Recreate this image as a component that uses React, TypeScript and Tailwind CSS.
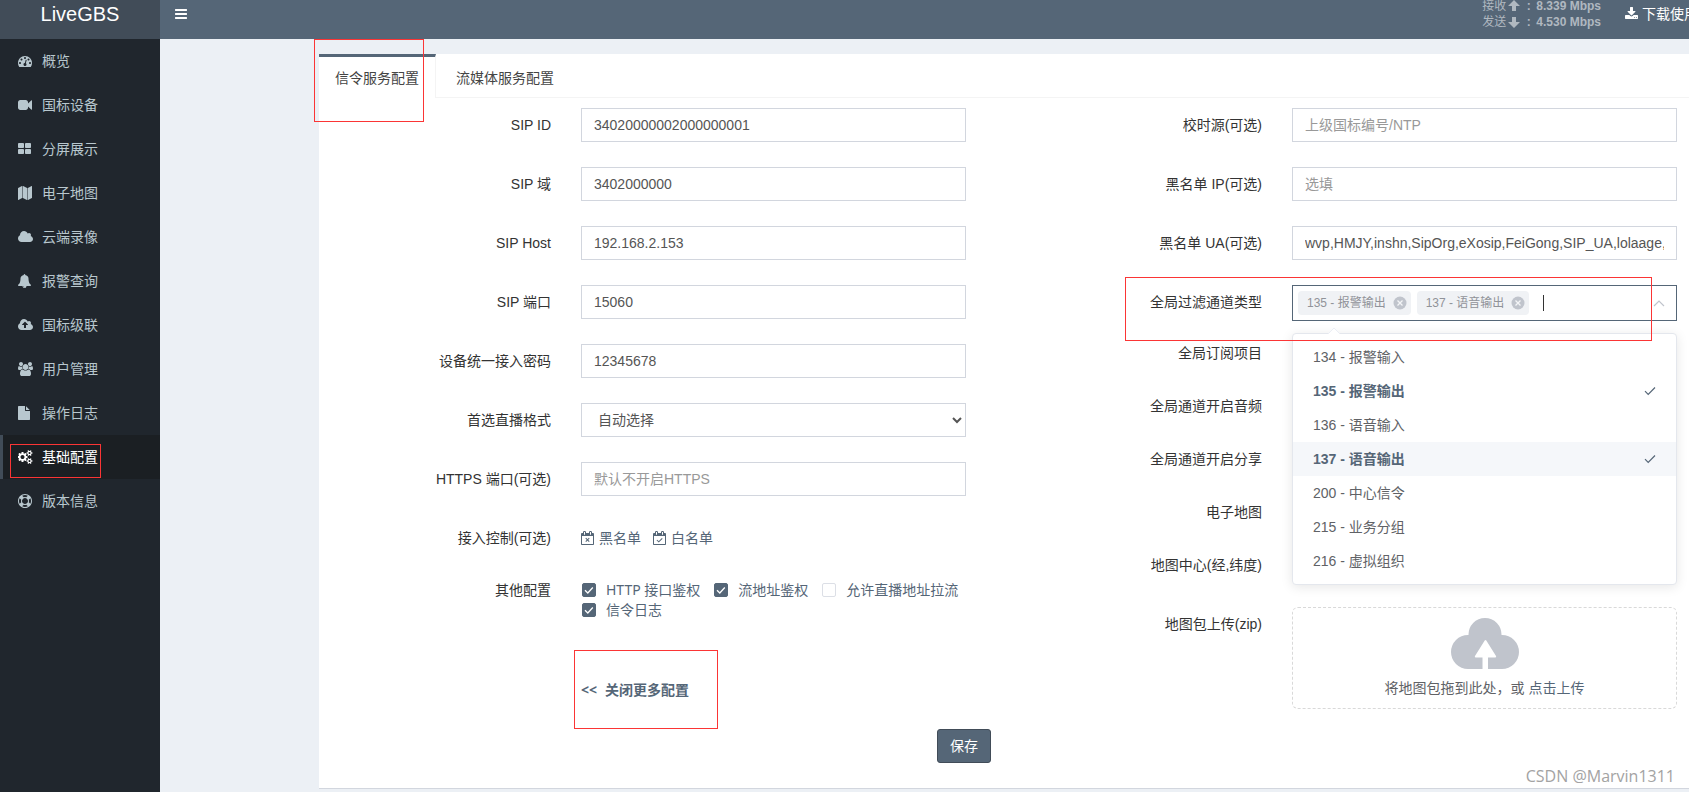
import React from "react";

const CLOUD =
  "M1984 1152q0 159-112.5 271.5t-271.5 112.5h-1088q-185 0-316.5-131.5t-131.5-316.5q0-132 71-241.5t187-163.5q-2-28-2-43 0-212 150-362t362-150q158 0 286.5 88t187.5 230q70-62 166-62 106 0 181 75t75 181q0 75-41 138 129 30 213 134.5t84 239.5z";
const SMALL_COG =
  "v140q0 16-149 31-12 27-30 52 51 113 51 138 0 4-4 7-122 71-124 71-8 0-46-47t-52-68q-20 2-30 2t-30-2q-14 21-52 68t-46 47q-2 0-124-71-4-3-4-7 0-25 51-138-18-25-30-52-149-15-149-31v-140q0-16 149-31 13-29 30-52-51-113-51-138 0-4 4-7 4-2 35-20t59-34 30-16q8 0 46 46.5t52 67.5q20-2 30-2t30 2q51-71 92-112l6-2q4 0 124 70 4 3 4 7 0 25-51 138 17 23 30 52 149 15 149 31z";

const ICONS = {
  bars: {
    box: "128 0 1536 1792",
    d: "M1664 1344v128q0 26-19 45t-45 19h-1408q-26 0-45-19t-19-45v-128q0-26 19-45t45-19h1408q26 0 45 19t19 45zm0-512v128q0 26-19 45t-45 19h-1408q-26 0-45-19t-19-45v-128q0-26 19-45t45-19h1408q26 0 45 19t19 45zm0-512v128q0 26-19 45t-45 19h-1408q-26 0-45-19t-19-45v-128q0-26 19-45t45-19h1408q26 0 45 19t19 45z",
  },
  dashboard: {
    box: "0 0 1792 1792",
    d: "M384 1152q0-53-37.5-90.5t-90.5-37.5-90.5 37.5-37.5 90.5 37.5 90.5 90.5 37.5 90.5-37.5 37.5-90.5zm192-448q0-53-37.5-90.5t-90.5-37.5-90.5 37.5-37.5 90.5 37.5 90.5 90.5 37.5 90.5-37.5 37.5-90.5zm428 481l101-382q6-26-7.5-48.5t-38.5-29.5-48 6.5-30 39.5l-101 382q-60 5-107 43.5t-63 98.5q-20 77 20 146t117 89 146-20 89-117q16-60-6-117t-72-91zm660-33q0-53-37.5-90.5t-90.5-37.5-90.5 37.5-37.5 90.5 37.5 90.5 90.5 37.5 90.5-37.5 37.5-90.5zm-640-640q0-53-37.5-90.5t-90.5-37.5-90.5 37.5-37.5 90.5 37.5 90.5 90.5 37.5 90.5-37.5 37.5-90.5zm448 192q0-53-37.5-90.5t-90.5-37.5-90.5 37.5-37.5 90.5 37.5 90.5 90.5 37.5 90.5-37.5 37.5-90.5zm320 448q0 261-141 483-19 29-54 29h-1402q-35 0-54-29-141-221-141-483 0-182 71-348t191-286 286-191 348-71 348 71 286 191 191 286 71 348z",
  },
  video: {
    box: "0 0 1792 1792",
    d: "M1792 352v1088q0 42-39 59-13 5-25 5-27 0-45-19l-403-403v166q0 119-84.5 203.5t-203.5 84.5h-704q-119 0-203.5-84.5t-84.5-203.5v-704q0-119 84.5-203.5t203.5-84.5h704q119 0 203.5 84.5t84.5 203.5v165l403-402q18-19 45-19 12 0 25 5 39 17 39 59z",
  },
  grid: {
    box: "64 0 1664 1792",
    d: "M832 1024v384q0 52-38 90t-90 38h-512q-52 0-90-38t-38-90v-384q0-52 38-90t90-38h512q52 0 90 38t38 90zm0-768v384q0 52-38 90t-90 38h-512q-52 0-90-38t-38-90v-384q0-52 38-90t90-38h512q52 0 90 38t38 90zm896 768v384q0 52-38 90t-90 38h-512q-52 0-90-38t-38-90v-384q0-52 38-90t90-38h512q52 0 90 38t38 90zm0-768v384q0 52-38 90t-90 38h-512q-52 0-90-38t-38-90v-384q0-52 38-90t90-38h512q52 0 90 38t38 90z",
  },
  map: {
    box: "0 0 1792 1792",
    d: "M512 0q13 0 22.5 9.5t9.5 22.5v1472q0 20-17 28l-480 256q-7 4-15 4-13 0-22.5-9.5t-9.5-22.5v-1472q0-20 17-28l480-256q7-4 15-4zm1248 0q13 0 22.5 9.5t9.5 22.5v1472q0 20-17 28l-480 256q-7 4-15 4-13 0-22.5-9.5t-9.5-22.5v-1472q0-20 17-28l480-256q7-4 15-4zm-1120 0q8 0 14 3l512 256q18 10 18 29v1472q0 13-9.5 22.5t-22.5 9.5q-8 0-14-3l-512-256q-18-10-18-29v-1472q0-13 9.5-22.5t22.5-9.5z",
  },
  cloud: { box: "64 0 1920 1792", d: CLOUD },
  bell: {
    box: "64 0 1664 1792",
    d: "M912 1696q0-16-16-16-59 0-101.5-42.5t-42.5-101.5q0-16-16-16t-16 16q0 73 51.5 124.5t124.5 51.5q16 0 16-16zm816-288q0 52-38 90t-90 38h-448q0 106-75 181t-181 75-181-75-75-181h-448q-52 0-90-38t-38-90q50-42 91-88t85-119.5 74.5-158.5 50-206 19.5-260q0-152 117-282.5t307-158.5q-8-19-8-39 0-40 28-68t68-28 68 28 28 68q0 20-8 39 190 28 307 158.5t117 282.5q0 139 19.5 260t50 206 74.5 158.5 85 119.5 91 88z",
  },
  cloudUpload: {
    box: "64 0 1920 1792",
    d:
      "M1344 864q0-14-9-23l-352-352q-9-9-23-9t-23 9l-351 351q-10 12-10 24 0 14 9 23t23 9h224v352q0 13 9.5 22.5t22.5 9.5h192q13 0 22.5-9.5t9.5-22.5v-352h224q13 0 22.5-9.5t9.5-22.5z" +
      CLOUD,
  },
  users: {
    box: "-64 0 1920 1792",
    d: "M529 896q-162 5-265 128h-134q-82 0-138-40.5t-56-118.5q0-353 124-353 6 0 43.5 21t97.5 42.5 119 21.5q67 0 133-23-5 37-5 66 0 139 81 256zm1071 637q0 120-73 189.5t-194 69.5h-874q-121 0-194-69.5t-73-189.5q0-53 3.5-103.5t14-109 26.5-108.5 43-97.5 62-81 85.5-53.5 111.5-20q10 0 43 21.5t73 48 107 48 135 21.5 135-21.5 107-48 73-48 43-21.5q61 0 111.5 20t85.5 53.5 62 81 43 97.5 26.5 108.5 14 109 3.5 103.5zm-1024-1277q0 106-75 181t-181 75-181-75-75-181 75-181 181-75 181 75 75 181zm704 384q0 159-112.5 271.5t-271.5 112.5-271.5-112.5-112.5-271.5 112.5-271.5 271.5-112.5 271.5 112.5 112.5 271.5zm576 225q0 78-56 118.5t-138 40.5h-134q-103-123-265-128 81-117 81-256 0-29-5-66 66 23 133 23 59 0 119-21.5t97.5-42.5 43.5-21q124 0 124 353zm-128-609q0 106-75 181t-181 75-181-75-75-181 75-181 181-75 181 75 75 181z",
  },
  file: {
    box: "128 0 1536 1792",
    d: "M1152 512v-472q22 14 36 28l408 408q14 14 28 36h-472zm-128 32q0 40 28 68t68 28h544v1056q0 40-28 68t-68 28h-1344q-40 0-68-28t-28-68v-1600q0-40 28-68t68-28h800v544z",
  },
  cogs: {
    box: "0 0 1920 1792",
    d:
      "M832 896q0-106-75-181t-181-75-181 75-75 181 75 181 181 75 181-75 75-181zm768 512q0-52-38-90t-90-38-90 38-38 90q0 53 37.5 90.5t90.5 37.5 90.5-37.5 37.5-90.5zm0-1024q0-52-38-90t-90-38-90 38-38 90q0 53 37.5 90.5t90.5 37.5 90.5-37.5 37.5-90.5zm-384 421v185q0 10-7 19.5t-16 10.5l-155 24q-11 35-32 76 34 48 90 115 7 11 7 20 0 12-7 19-23 30-82.5 89.5t-78.5 59.5q-11 0-21-7l-115-90q-37 19-77 31-11 108-23 155-7 24-30 24h-186q-11 0-20-7.5t-10-17.5l-23-153q-34-10-75-31l-118 89q-7 7-20 7-11 0-21-8-144-133-144-160 0-9 7-19 10-14 41-53t47-61q-23-44-35-82l-152-24q-10-1-17-9.5t-7-19.5v-185q0-10 7-19.5t16-10.5l155-24q11-35 32-76-34-48-90-115-7-11-7-20 0-12 7-20 22-30 82-89t79-59q11 0 21 7l115 90q34-18 77-32 11-108 23-154 7-24 30-24h186q11 0 20 7.5t10 17.5l23 153q34 10 75 31l118-89q8-7 20-7 11 0 21 8 144 133 144 160 0 8-7 19-12 16-42 54t-45 60q23 48 34 82l152 23q10 2 17 10.5t7 19.5z" +
      "M1856 1338" +
      SMALL_COG +
      "M1856 314" +
      SMALL_COG,
  },
  ring: {
    box: "0 0 1792 1792",
    d: "M896 0q182 0 348 71t286 191 191 286 71 348-71 348-191 286-286 191-348 71-348-71-286-191-191-286-71-348 71-348 191-286 286-191 348-71zm0 128q-190 0-361 90l194 194q82-28 167-28t167 28l194-194q-171-90-361-90zm-678 1129l194-194q-28-82-28-167t28-167l-194-194q-90 171-90 361t90 361zm678 407q190 0 361-90l-194-194q-82 28-167 28t-167-28l-194 194q171 90 361 90zm0-384q159 0 271.5-112.5t112.5-271.5-112.5-271.5-271.5-112.5-271.5 112.5-112.5 271.5 112.5 271.5 271.5 112.5zm484-217l194 194q90-171 90-361t-90-361l-194 194q28 82 28 167t-28 167z",
  },
  download: {
    box: "64 0 1664 1792",
    d: "M1344 1344q0-26-19-45t-45-19-45 19-19 45 19 45 45 19 45-19 19-45zm256 0q0-26-19-45t-45-19-45 19-19 45 19 45 45 19 45-19 19-45zm128-224v320q0 40-28 68t-68 28h-1472q-40 0-68-28t-28-68v-320q0-40 28-68t68-28h465l135 136q58 56 136 56t136-56l136-136h464q40 0 68 28t28 68zm-325-569q17 41-14 70l-448 448q-18 19-45 19t-45-19l-448-448q-31-29-14-70 17-39 59-39h256v-448q0-26 19-45t45-19h256q26 0 45 19t19 45v448h256q42 0 59 39z",
  },
};
type IconName = keyof typeof ICONS;

function Icon({ name }: { name: IconName }) {
  const { box, d } = ICONS[name];
  return (
    <svg viewBox={box} className="h-3.5 w-auto shrink-0" fill="currentColor" fillRule="evenodd" aria-hidden="true">
      <path d={d} />
    </svg>
  );
}

function CalendarIcon({ mark }: { mark: string }) {
  return (
    <svg viewBox="64 0 1664 1792" className="h-3.5 w-auto shrink-0" fill="currentColor" aria-hidden="true">
      <path
        fillRule="evenodd"
        d="M192 1664h1408v-1024h-1408v1024zm384-1216v-288q0-14-9-23t-23-9h-64q-14 0-23 9t-9 23v288q0 14 9 23t23 9h64q14 0 23-9t9-23zm768 0v-288q0-14-9-23t-23-9h-64q-14 0-23 9t-9 23v288q0 14 9 23t23 9h64q14 0 23-9t9-23zm384-64v1280q0 52-38 90t-90 38h-1408q-52 0-90-38t-38-90v-1280q0-52 38-90t90-38h128v-96q0-66 47-113t113-47h64q66 0 113 47t47 113v96h384v-96q0-66 47-113t113-47h64q66 0 113 47t47 113v96h128q52 0 90 38t38 90z"
      />
      <path d={mark} fill="none" stroke="currentColor" strokeWidth="130" />
    </svg>
  );
}

function BlockArrow({ down = false }: { down?: boolean }) {
  return (
    <svg viewBox="0 0 12 12" className="mr-px ml-0.5 h-3 w-3 shrink-0" fill="currentColor" aria-hidden="true">
      <path d={down ? "M4 1h4v5h4L6 12 0 6h4z" : "M4 11h4V6h4L6 0 0 6h4z"} />
    </svg>
  );
}

const NAV: { icon: IconName; label: string }[] = [
  { icon: "dashboard", label: "概览" },
  { icon: "video", label: "国标设备" },
  { icon: "grid", label: "分屏展示" },
  { icon: "map", label: "电子地图" },
  { icon: "cloud", label: "云端录像" },
  { icon: "bell", label: "报警查询" },
  { icon: "cloudUpload", label: "国标级联" },
  { icon: "users", label: "用户管理" },
  { icon: "file", label: "操作日志" },
  { icon: "cogs", label: "基础配置" },
  { icon: "ring", label: "版本信息" },
];

const FIELD =
  "block h-[34px] w-full rounded-none border border-[#d2d6de] bg-white px-3 text-sm text-[#555] outline-none placeholder:text-[#999]";
const ROW = "grid grid-cols-[222px_minmax(0,1fr)] gap-x-[30px]";
const LABEL = "text-right text-sm leading-[34px] text-[#333]";

function TextRow({ id, label, value, placeholder }: { id: string; label: string; value?: string; placeholder?: string }) {
  return (
    <div className={ROW}>
      <label htmlFor={id} className={LABEL}>
        {label}
      </label>
      <input id={id} type="text" defaultValue={value} placeholder={placeholder} className={FIELD} />
    </div>
  );
}

function Tick({ label, checked = false }: { label: string; checked?: boolean }) {
  return (
    <label className="flex h-5 items-center text-sm text-[#556677]">
      <span className="relative mr-2.5 ml-px flex h-3.5 w-3.5">
        <input
          type="checkbox"
          defaultChecked={checked}
          className="peer h-3.5 w-3.5 appearance-none rounded-xs border border-[#dcdfe6] bg-white checked:border-[#556677] checked:bg-[#556677]"
        />
        <svg
          viewBox="0 0 14 14"
          className="pointer-events-none absolute inset-0 hidden h-3.5 w-3.5 peer-checked:block"
          fill="none"
          stroke="#fff"
          strokeWidth="1.3"
          aria-hidden="true"
        >
          <path d="M3 7.200l2.800 2.800 5-5.500" />
        </svg>
      </span>
      {label}
    </label>
  );
}

const OPTIONS = [
  { text: "134 - 报警输入" },
  { text: "135 - 报警输出", on: true },
  { text: "136 - 语音输入" },
  { text: "137 - 语音输出", on: true, hover: true },
  { text: "200 - 中心信令" },
  { text: "215 - 业务分组" },
  { text: "216 - 虚拟组织" },
];

function Tag({ text }: { text: string }) {
  return (
    <span className="flex h-6 items-center gap-[7px] rounded-sm bg-[#f0f2f5] pr-1 pl-[9px] text-xs whitespace-nowrap text-[#909399]">
      {text}
      <button type="button" aria-label={"移除 " + text} className="h-3.5 w-3.5">
        <svg viewBox="0 0 14 14" className="block h-3.5 w-3.5" aria-hidden="true">
          <circle cx="7" cy="7" r="6.5" fill="#c0c4cc" />
          <path d="M4.500 4.500l5 5m0-5l-5 5" stroke="#f4f5f7" strokeWidth="1.3" />
        </svg>
      </button>
    </span>
  );
}

function ChannelSelect() {
  return (
    <div className="relative">
      <div className="flex h-9 items-center gap-1.5 border border-[#556677] bg-white pr-[11px] pl-[5px]">
        <Tag text="135 - 报警输出" />
        <Tag text="137 - 语音输出" />
        <span className="ml-2 h-4 w-px bg-[#333]" />
        <input id="channel" type="text" role="combobox" aria-expanded="true" aria-controls="channel-list" className="h-7 min-w-0 flex-1 text-sm outline-none" />
        <svg viewBox="0 0 12 12" className="h-3 w-3 shrink-0" fill="none" stroke="#c0c4cc" strokeWidth="1.2" aria-hidden="true">
          <path d="M1 9l5-5 5 5" />
        </svg>
      </div>
      <div className="absolute inset-x-0 top-12 z-10 rounded-sm border border-[#e4e7ed] bg-white py-1.5 shadow-[0_2px_12px_0_rgba(0,0,0,0.1)]">
        <svg viewBox="0 0 12 6" className="absolute -top-1.5 left-[35px] h-1.5 w-3" aria-hidden="true">
          <path d="M0 6l6-6 6 6" fill="#fff" stroke="#ebeef5" />
        </svg>
        <ul id="channel-list" role="listbox" aria-multiselectable="true">
          {OPTIONS.map((o) => (
            <li
              key={o.text}
              role="option"
              aria-selected={!!o.on}
              className={
                "flex h-[34px] items-center justify-between pr-5 pl-5 text-sm " +
                (o.on ? "font-bold text-[#556677] " : "text-[#606266] ") +
                (o.hover ? "bg-[#f5f7fa]" : "")
              }
            >
              {o.text}
              {o.on && (
                <svg viewBox="0 0 12 12" className="h-3 w-3" fill="none" stroke="#556677" strokeWidth="1.2" aria-hidden="true">
                  <path d="M1 6.200l3.200 3.300L11 2.500" />
                </svg>
              )}
            </li>
          ))}
        </ul>
      </div>
    </div>
  );
}

function Outline({ className }: { className: string }) {
  return <span className={"pointer-events-none absolute z-20 border border-[#fb3535] " + className} />;
}

export default function App() {
  return (
    <div className="flex min-h-screen flex-col overflow-hidden bg-[#ecf0f5] font-['Liberation_Sans','Noto_Sans_CJK_SC',sans-serif] text-sm text-[#333]">
      <header className="flex h-[39px] overflow-hidden bg-[#556677] text-white">
        <a href="#home" className="w-40 shrink-0 bg-[#414c58] text-center text-xl leading-7">
          LiveGBS
        </a>
        <div className="flex h-7 min-w-0 flex-1 items-center">
          <button type="button" aria-label="菜单" className="pl-[15px]">
            <Icon name="bars" />
          </button>
          <div className="ml-auto text-xs leading-4 font-bold text-[#b0b8c0]">
            <div className="flex items-center">
              <span className="font-normal">接收</span>
              <BlockArrow />
              <span className="w-[15px] text-center">:</span>8.339 Mbps
            </div>
            <div className="flex items-center">
              <span className="font-normal">发送</span>
              <BlockArrow down />
              <span className="w-[15px] text-center">:</span>4.530 Mbps
            </div>
          </div>
          <a href="#download" className="ml-6 flex w-16 shrink-0 items-center gap-1 whitespace-nowrap">
            <Icon name="download" />
            <span className="shrink-0">下载使用</span>
          </a>
        </div>
      </header>

      <div className="flex flex-1">
        <nav className="w-40 shrink-0 bg-[#20262d]">
          {NAV.map((n) => {
            const active = n.label === "基础配置";
            return (
              <a
                key={n.label}
                href={"#" + n.icon}
                className={
                  "relative flex h-11 items-center border-l-3 pl-[15px] " +
                  (active ? "border-[#414c58] bg-[#1b1f23] text-white" : "border-transparent text-[#b8c7ce]")
                }
              >
                <span className="flex w-6 items-center">
                  <Icon name={n.icon} />
                </span>
                {n.label}
                {active && <Outline className="top-[9px] left-[7px] h-[34px] w-[91px]" />}
              </a>
            );
          })}
        </nav>

        <main className="min-w-0 flex-1 pt-[15px] pb-[3px] pl-[159px]">
          <section className="relative flex h-full flex-col border-b border-[#d2d6de] bg-white">
            <Outline className="-top-[15px] -left-[5px] h-[83px] w-[110px]" />
            <div role="tablist" className="flex">
              <button type="button" role="tab" aria-selected="true" className="h-11 border-t-3 border-r border-t-[#556677] border-r-[#f4f4f4] px-4 text-[#444]">
                信令服务配置
              </button>
              <button type="button" role="tab" aria-selected="false" className="h-11 border-t-3 border-t-transparent px-5 text-[#444] shadow-[inset_0_-1px_0_#f4f4f4]">
                流媒体服务配置
              </button>
              <div className="flex-1 border-b border-[#f4f4f4]" />
            </div>

            <form className="grid grid-cols-2 gap-x-[74px] pt-2.5 pr-3 pl-2.5">
              <div className="flex flex-col gap-[25px]">
                <TextRow id="sip-id" label="SIP ID" value="34020000002000000001" />
                <TextRow id="sip-domain" label="SIP 域" value="3402000000" />
                <TextRow id="sip-host" label="SIP Host" value="192.168.2.153" />
                <TextRow id="sip-port" label="SIP 端口" value="15060" />
                <TextRow id="password" label="设备统一接入密码" value="12345678" />
                <div className={ROW}>
                  <label htmlFor="format" className={LABEL}>
                    首选直播格式
                  </label>
                  <select id="format" className="block h-[34px] w-full rounded-none border border-[#d2d6de] bg-white px-3 text-sm text-[#555] outline-none">
                    <option>自动选择</option>
                  </select>
                </div>
                <TextRow id="https-port" label="HTTPS 端口(可选)" placeholder="默认不开启HTTPS" />
                <div className={ROW}>
                  <span className={LABEL}>接入控制(可选)</span>
                  <div className="flex h-[34px] items-center gap-3 text-[#556677]">
                    <a href="#blacklist" className="flex items-center gap-[5px]">
                      <CalendarIcon mark="M670 920l450 450m0-450l-450 450" />
                      黑名单
                    </a>
                    <a href="#whitelist" className="flex items-center gap-[5px]">
                      <CalendarIcon mark="M560 1150l240 240 450-450" />
                      白名单
                    </a>
                  </div>
                </div>
                <div className={ROW}>
                  <span className="text-right leading-5">其他配置</span>
                  <div className="flex flex-wrap gap-x-[13px] font-['Noto_Sans','Noto_Sans_CJK_SC',sans-serif]">
                    <Tick label="HTTP 接口鉴权" checked />
                    <Tick label="流地址鉴权" checked />
                    <Tick label="允许直播地址拉流" />
                    <Tick label="信令日志" checked />
                  </div>
                </div>
                <div className={ROW}>
                  <span />
                  <div className="relative mt-[5px] h-[79px]">
                    <Outline className="-left-[7px] inset-y-0 w-36" />
                    <button type="button" className="flex h-20 items-center gap-2 font-['Noto_Sans','Noto_Sans_CJK_SC',sans-serif] font-bold text-[#556677]">
                      <span>{"<<"}</span>
                      <span>关闭更多配置</span>
                    </button>
                  </div>
                </div>
              </div>

              <div className="flex flex-col">
                <div className="flex flex-col gap-[25px]">
                  <TextRow id="time-source" label="校时源(可选)" placeholder="上级国标编号/NTP" />
                  <TextRow id="black-ip" label="黑名单 IP(可选)" placeholder="选填" />
                  <TextRow id="black-ua" label="黑名单 UA(可选)" value="wvp,HMJY,inshn,SipOrg,eXosip,FeiGong,SIP_UA,lolaage," />
                  <div className={ROW + " relative"}>
                    <label htmlFor="channel" className={LABEL}>
                      全局过滤通道类型
                    </label>
                    <ChannelSelect />
                    <Outline className="-top-2 right-[25px] -bottom-5 left-[85px]" />
                  </div>
                </div>
                <div className="flex w-[222px] flex-col gap-[19px] pt-[15px] text-right leading-[34px]">
                  <span>全局订阅项目</span>
                  <span>全局通道开启音频</span>
                  <span>全局通道开启分享</span>
                  <span>电子地图</span>
                  <span>地图中心(经,纬度)</span>
                </div>
                <div className={ROW + " pt-[25px]"}>
                  <span className={LABEL}>地图包上传(zip)</span>
                  <button type="button" className="flex h-[102px] flex-col items-center rounded-md border border-dashed border-[#d9d9d9] bg-white pt-2.5 text-[#606266]">
                    <svg viewBox="0 0 68 51" className="h-[51px] w-[68px]" aria-hidden="true">
                      <path
                        d="M17 51a17 17 0 0 1 0-34h.5A16.500 16.500 0 0 1 34 0a16.500 16.500 0 0 1 16.500 17H51a17 17 0 0 1 0 34H37V39.500H44.500Q45.500 39 45 38L35.300 22.500Q34.500 21.500 33.700 22.500L24 38Q23.500 39 24.500 39.500H31.500V51z"
                        fill="#c0c4cc"
                      />
                    </svg>
                    <span className="mt-[9px]">
                      将地图包拖到此处，或 <span className="text-[#556677]">点击上传</span>
                    </span>
                  </button>
                </div>
              </div>
            </form>

            <div className="flex pb-6 pl-[618px]">
              <button type="button" className="h-[34px] rounded-[3px] border border-[#414c58] bg-[#556677] px-3 text-white">
                保存
              </button>
            </div>
            <span className="absolute right-3.5 bottom-0 font-['Open_Sans',sans-serif] text-base leading-6 text-[#a3a3a3]">CSDN @Marvin1311</span>
          </section>
        </main>
      </div>
    </div>
  );
}
